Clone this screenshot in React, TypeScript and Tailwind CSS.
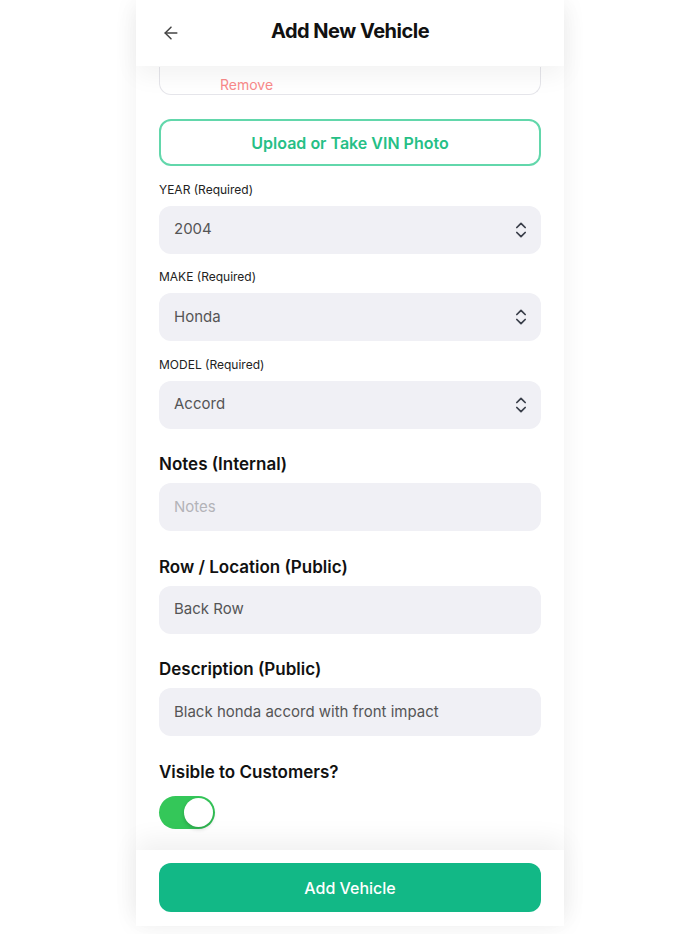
import React from "react";
import { ArrowLeft, ChevronsUpDown } from "lucide-react";

interface SelectFieldProps {
  label: string;
  value: string;
}

interface TextFieldProps {
  label: string;
  value?: string;
  placeholder?: string;
}

const FONT = { fontFamily: "Inter, 'Noto Sans', sans-serif" };

const SELECT_FIELDS: SelectFieldProps[] = [
  { label: "YEAR (Required)", value: "2004" },
  { label: "MAKE (Required)", value: "Honda" },
  { label: "MODEL (Required)", value: "Accord" },
];

const TEXT_FIELDS: TextFieldProps[] = [
  { label: "Notes (Internal)", placeholder: "Notes" },
  { label: "Row / Location (Public)", value: "Back Row" },
  { label: "Description (Public)", value: "Black honda accord with front impact" },
];

const SelectField: React.FC<SelectFieldProps> = ({ label, value }) => (
  <div className="flex flex-col mt-[15.5px]">
    <span className="text-[12px] leading-4 font-normal text-[#222]">{label}</span>
    <div className="mt-2 h-[48px] rounded-xl bg-[#f0f0f5] flex items-center justify-between pl-[15px] pr-[10px]">
      <span className="text-[15px] text-[#555]">{value}</span>
      <ChevronsUpDown className="w-5 h-5 text-[#3a3f4a]" strokeWidth={2.1} />
    </div>
  </div>
);

const TextField: React.FC<TextFieldProps> = ({ label, value, placeholder }) => (
  <div className="flex flex-col mt-[23.5px]">
    <span className="text-[17px] leading-6 font-semibold text-[#111]">{label}</span>
    <div className="mt-[7px] h-[48px] rounded-xl bg-[#f0f0f5] flex items-center px-[15px]">
      {value ? (
        <span className="text-[15px] text-[#555]">{value}</span>
      ) : (
        <span className="text-[15px] text-[#b3b3b8]">{placeholder}</span>
      )}
    </div>
  </div>
);

export default function App() {
  return (
    <div className="min-h-[934px] bg-white" style={FONT}>
      <div className="mx-auto w-[428px] bg-white shadow-[0_0_24px_rgba(0,0,0,0.06)] flex flex-col">
        <header className="relative z-10 h-[66px] bg-white flex items-center justify-center pb-1 shadow-[0_10px_24px_rgba(0,0,0,0.05)]">
          <ArrowLeft className="absolute left-[25px] top-[23px] w-5 h-5 text-[#444]" strokeWidth={1.8} />
          <h1 className="text-[20px] font-bold text-[#111] tracking-tight">Add New Vehicle</h1>
        </header>

        <main className="px-[23px] flex flex-col pt-[1px]">
          <div className="h-[28px] border-x border-b border-[#e5e5ea] rounded-b-xl flex items-end pl-[60px] pb-[1px]">
            <span className="text-[14px] leading-4 text-[#f98a8a]">Remove</span>
          </div>

          <button className="mt-6 h-[47px] rounded-xl border-2 border-[#62d7ab] bg-white text-[16px] font-semibold text-[#26bf86]">
            Upload or Take VIN Photo
          </button>

          {SELECT_FIELDS.map((f) => (
            <SelectField key={f.label} {...f} />
          ))}

          {TEXT_FIELDS.map((f) => (
            <TextField key={f.label} {...f} />
          ))}

          <div className="flex flex-col mt-[24px]">
            <span className="text-[17px] leading-6 font-semibold text-[#111]">Visible to Customers?</span>
            <div className="mt-3 w-[56px] h-[33px] rounded-full bg-[#34c759] flex items-center justify-end pr-[2px]">
              <div className="w-[29px] h-[29px] rounded-full bg-white shadow-[0_2px_4px_rgba(0,0,0,0.2)]" />
            </div>
          </div>
        </main>

        <footer className="mt-[21px] bg-white px-[23px] pt-[13px] pb-[14px] shadow-[0_-10px_24px_rgba(0,0,0,0.06)]">
          <button className="w-full h-[49px] rounded-xl bg-[#12b886] text-white text-[16px] font-medium">
            Add Vehicle
          </button>
        </footer>
      </div>
    </div>
  );
}
